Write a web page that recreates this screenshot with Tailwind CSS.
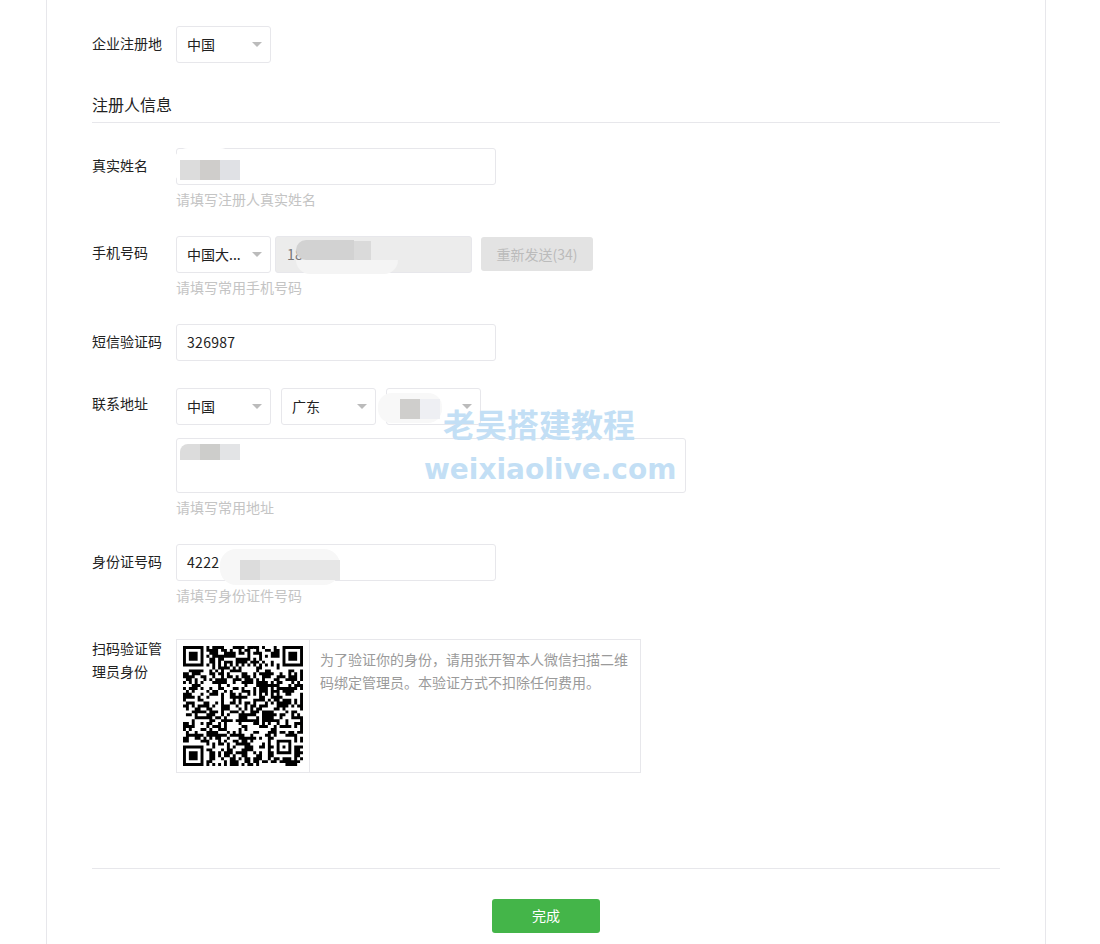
<!DOCTYPE html>
<html lang="zh-CN">

<head>
  <meta charset="UTF-8" />
  <title>注册人信息</title>
  <script src="https://cdn.jsdelivr.net/npm/@tailwindcss/browser@4"></script>
</head>

<body class="bg-white h-[944px] overflow-hidden font-['Noto_Sans_CJK_SC',sans-serif] text-sm text-[#222]">
  <div class="relative ml-[46px] w-[1000px] h-[944px] border-x border-[#e7e7eb] px-[45px] pt-[26px]">

    <!-- 企业注册地 -->
    <div class="flex mb-[30px]">
      <label class="w-[84px] pr-[12px] pt-[6px] leading-[23px]">企业注册地</label>
      <div class="flex items-center justify-between w-[95px] h-[37px] border border-[#e7e7eb] rounded-[3px] bg-white pl-[10px] pr-[8px]">
        <span class="pb-[2px]">中国</span>
        <svg width="10" height="5" viewBox="0 0 10 5"><path d="M0 0h10L5 5z" fill="#bbb" /></svg>
      </div>
    </div>

    <h3 class="text-base leading-6 -mt-px pb-[6px] border-b border-[#e7e7eb] mb-[25px]">注册人信息</h3>

    <!-- 真实姓名 -->
    <div class="flex mb-[26px]">
      <label class="w-[84px] pr-[12px] pt-[6px] leading-[23px]">真实姓名</label>
      <div>
        <div class="relative w-[320px] h-[37px] border border-[#e7e7eb] rounded-[3px]">
          <div class="absolute left-[-3px] top-[-1px] w-[60px] h-[36px] rounded-[14px] bg-white"></div>
          <div class="absolute left-[3px] top-[11px] flex h-[20px]">
            <div class="w-[20px] bg-[#dcdcdc]"></div>
            <div class="w-[20px] bg-[#cfcdcb]"></div>
            <div class="w-[20px] bg-[#e0e1e5]"></div>
          </div>
        </div>
        <p class="mt-[4px] pb-px leading-5 text-[#c4c4c4]">请填写注册人真实姓名</p>
      </div>
    </div>

    <!-- 手机号码 -->
    <div class="flex mb-[26px]">
      <label class="w-[84px] pr-[12px] pt-[5px] leading-[23px]">手机号码</label>
      <div>
        <div class="flex items-start">
          <div class="flex items-center justify-between w-[95px] h-[37px] border border-[#e7e7eb] rounded-[3px] pl-[10px] pr-[8px]">
            <span class="pb-[2px]">中国大...</span>
            <svg width="10" height="5" viewBox="0 0 10 5"><path d="M0 0h10L5 5z" fill="#bbb" /></svg>
          </div>
          <div class="relative ml-[4px] w-[197px] h-[37px] border border-[#e7e7eb] rounded-[3px] bg-[#ececec] pl-[11px] leading-[35px] text-[#777] tracking-[0.3px]">
            18
            <div class="absolute left-[20px] top-[23px] w-[102px] h-[14px] rounded-b-[40px] bg-[#f4f4f4]"></div>
            <div class="absolute left-[20px] top-[3px] w-[58px] h-[20px] rounded-l-[12px] bg-[#d2d2d2]"></div>
            <div class="absolute left-[78px] top-[4px] w-[17px] h-[19px] bg-[#dadada]"></div>
          </div>
          <button class="ml-[9px] mt-px w-[112px] h-[34px] rounded-[3px] bg-[#e3e3e3] text-[#bbb]">重新发送(34)</button>
        </div>
        <p class="mt-[4px] pb-px leading-5 text-[#c4c4c4]">请填写常用手机号码</p>
      </div>
    </div>

    <!-- 短信验证码 -->
    <div class="flex mb-[27px]">
      <label class="w-[84px] pr-[12px] pt-[6px] leading-[23px]">短信验证码</label>
      <div class="w-[320px] h-[37px] border border-[#e7e7eb] rounded-[3px] pl-[10px] leading-[35px] tracking-[0.3px]">326987</div>
    </div>

    <!-- 联系地址 -->
    <div class="flex mb-[26px]">
      <label class="w-[84px] pr-[12px] pt-[4px] leading-[23px]">联系地址</label>
      <div>
        <div class="flex gap-[10px]">
          <div class="flex items-center justify-between w-[95px] h-[37px] border border-[#e7e7eb] rounded-[3px] pl-[10px] pr-[8px]">
            <span class="pb-[2px]">中国</span>
            <svg width="10" height="5" viewBox="0 0 10 5"><path d="M0 0h10L5 5z" fill="#bbb" /></svg>
          </div>
          <div class="flex items-center justify-between w-[95px] h-[37px] border border-[#e7e7eb] rounded-[3px] pl-[10px] pr-[8px]">
            <span class="pb-[2px]">广东</span>
            <svg width="10" height="5" viewBox="0 0 10 5"><path d="M0 0h10L5 5z" fill="#bbb" /></svg>
          </div>
          <div class="relative flex items-center justify-end w-[95px] h-[37px] border border-[#e7e7eb] rounded-[3px] pr-[8px]">
            <svg width="10" height="5" viewBox="0 0 10 5"><path d="M0 0h10L5 5z" fill="#bbb" /></svg>
            <div class="absolute left-[-9px] top-[4px] w-[64px] h-[30px] rounded-[14px] bg-[#f8f8f8]"></div>
            <div class="absolute left-[13px] top-[10px] w-[20px] h-[20px] bg-[#cfcecc]"></div>
            <div class="absolute left-[33px] top-[10px] w-[20px] h-[20px] bg-[#eeeff3]"></div>
          </div>
        </div>
        <div class="relative mt-[13px] w-[510px] h-[55px] border border-[#e7e7eb] rounded-[3px]">
          <div class="absolute left-[3px] top-[5px] flex h-[16px]">
            <div class="w-[20px] rounded-tl-[8px] bg-[#dcdcdc]"></div>
            <div class="w-[20px] bg-[#cdcdcb]"></div>
            <div class="w-[20px] bg-[#e3e4e6]"></div>
          </div>
        </div>
        <p class="mt-[4px] pb-px leading-5 text-[#c4c4c4]">请填写常用地址</p>
      </div>
    </div>

    <!-- 身份证号码 -->
    <div class="flex mb-[33px]">
      <label class="w-[84px] pr-[12px] pt-[6px] leading-[23px]">身份证号码</label>
      <div>
        <div class="relative w-[320px] h-[37px] border border-[#e7e7eb] rounded-[3px] pl-[10px] leading-[35px] tracking-[0.3px]">
          4222
          <div class="absolute left-[43px] top-[4px] w-[120px] h-[36px] rounded-[16px] bg-[#f7f7f7]"></div>
          <div class="absolute left-[63px] top-[15px] flex h-[20px]">
            <div class="w-[20px] bg-[#dcdcdc]"></div>
            <div class="w-[80px] bg-[#e6e6e6]"></div>
          </div>
        </div>
        <p class="mt-[4px] pb-px leading-5 text-[#c4c4c4]">请填写身份证件号码</p>
      </div>
    </div>

    <!-- 扫码验证 -->
    <div class="flex">
      <label class="w-[84px] pr-[12px] -mt-[2px] leading-[23px]">扫码验证管理员身份</label>
      <div class="flex w-[465px] h-[134px] border border-[#e7e7eb]">
        <div class="flex items-center justify-center w-[133px] shrink-0 border-r border-[#e7e7eb]">
          <svg id="qr" width="120" height="120" viewBox="0 0 41 41"><path id="qr-path" d="" fill="#000" /></svg>
        </div>
        <p class="px-[10px] pt-[8px] leading-[23px] text-[#9a9a9a]">为了验证你的身份，请用张开智本人微信扫描二维码绑定管理员。本验证方式不扣除任何费用。</p>
      </div>
    </div>

    <!-- 底部 -->
    <div class="mt-[95px] border-t border-[#e7e7eb] pt-[30px] flex justify-center">
      <button class="w-[108px] h-[34px] rounded-[3px] bg-[#44b549] text-white pb-[2px]">完成</button>
    </div>

    <!-- 水印 -->
    <div class="absolute left-[396px] top-[406px] text-[32px] leading-[34px] font-bold text-[#c3dff5] whitespace-nowrap">老吴搭建教程</div>
    <div class="absolute left-[377px] top-[450px] text-[28px] leading-[40px] font-bold font-['DejaVu_Sans',sans-serif] text-[#c3dff5] whitespace-nowrap">weixiaolive.com</div>
  </div>

  <script>
    // QR code pattern: finder squares, timing lines and seeded data modules
    const size = 41;
    const grid = [];
    let seed = 20211;
    for (let y = 0; y < size; y++) {
      grid.push([]);
      for (let x = 0; x < size; x++) {
        seed = (seed * 1103515245 + 12345) & 0x7fffffff;
        grid[y].push((seed >> 16) % 100 < 54 ? 1 : 0);
      }
    }

    function square(ox, oy, n) {
      for (let y = -1; y <= n; y++) {
        for (let x = -1; x <= n; x++) {
          const cx = ox + x, cy = oy + y;
          if (cx < 0 || cy < 0 || cx >= size || cy >= size) continue;
          const edge = x === 0 || y === 0 || x === n - 1 || y === n - 1;
          const core = x >= 2 && y >= 2 && x <= n - 3 && y <= n - 3;
          const inside = x >= 0 && y >= 0 && x < n && y < n;
          grid[cy][cx] = inside && (edge || core) ? 1 : 0;
        }
      }
    }

    for (let i = 8; i < size - 8; i++) {
      grid[6][i] = (i + 1) % 2;
      grid[i][6] = (i + 1) % 2;
    }
    square(0, 0, 7);
    square(size - 7, 0, 7);
    square(0, size - 7, 7);
    square(32, 32, 5);

    let d = '';
    grid.forEach((row, y) => row.forEach((on, x) => {
      if (on) d += 'M' + x + ' ' + y + 'h1v1h-1z';
    }));
    document.getElementById('qr-path').setAttribute('d', d);
  </script>
</body>

</html>
